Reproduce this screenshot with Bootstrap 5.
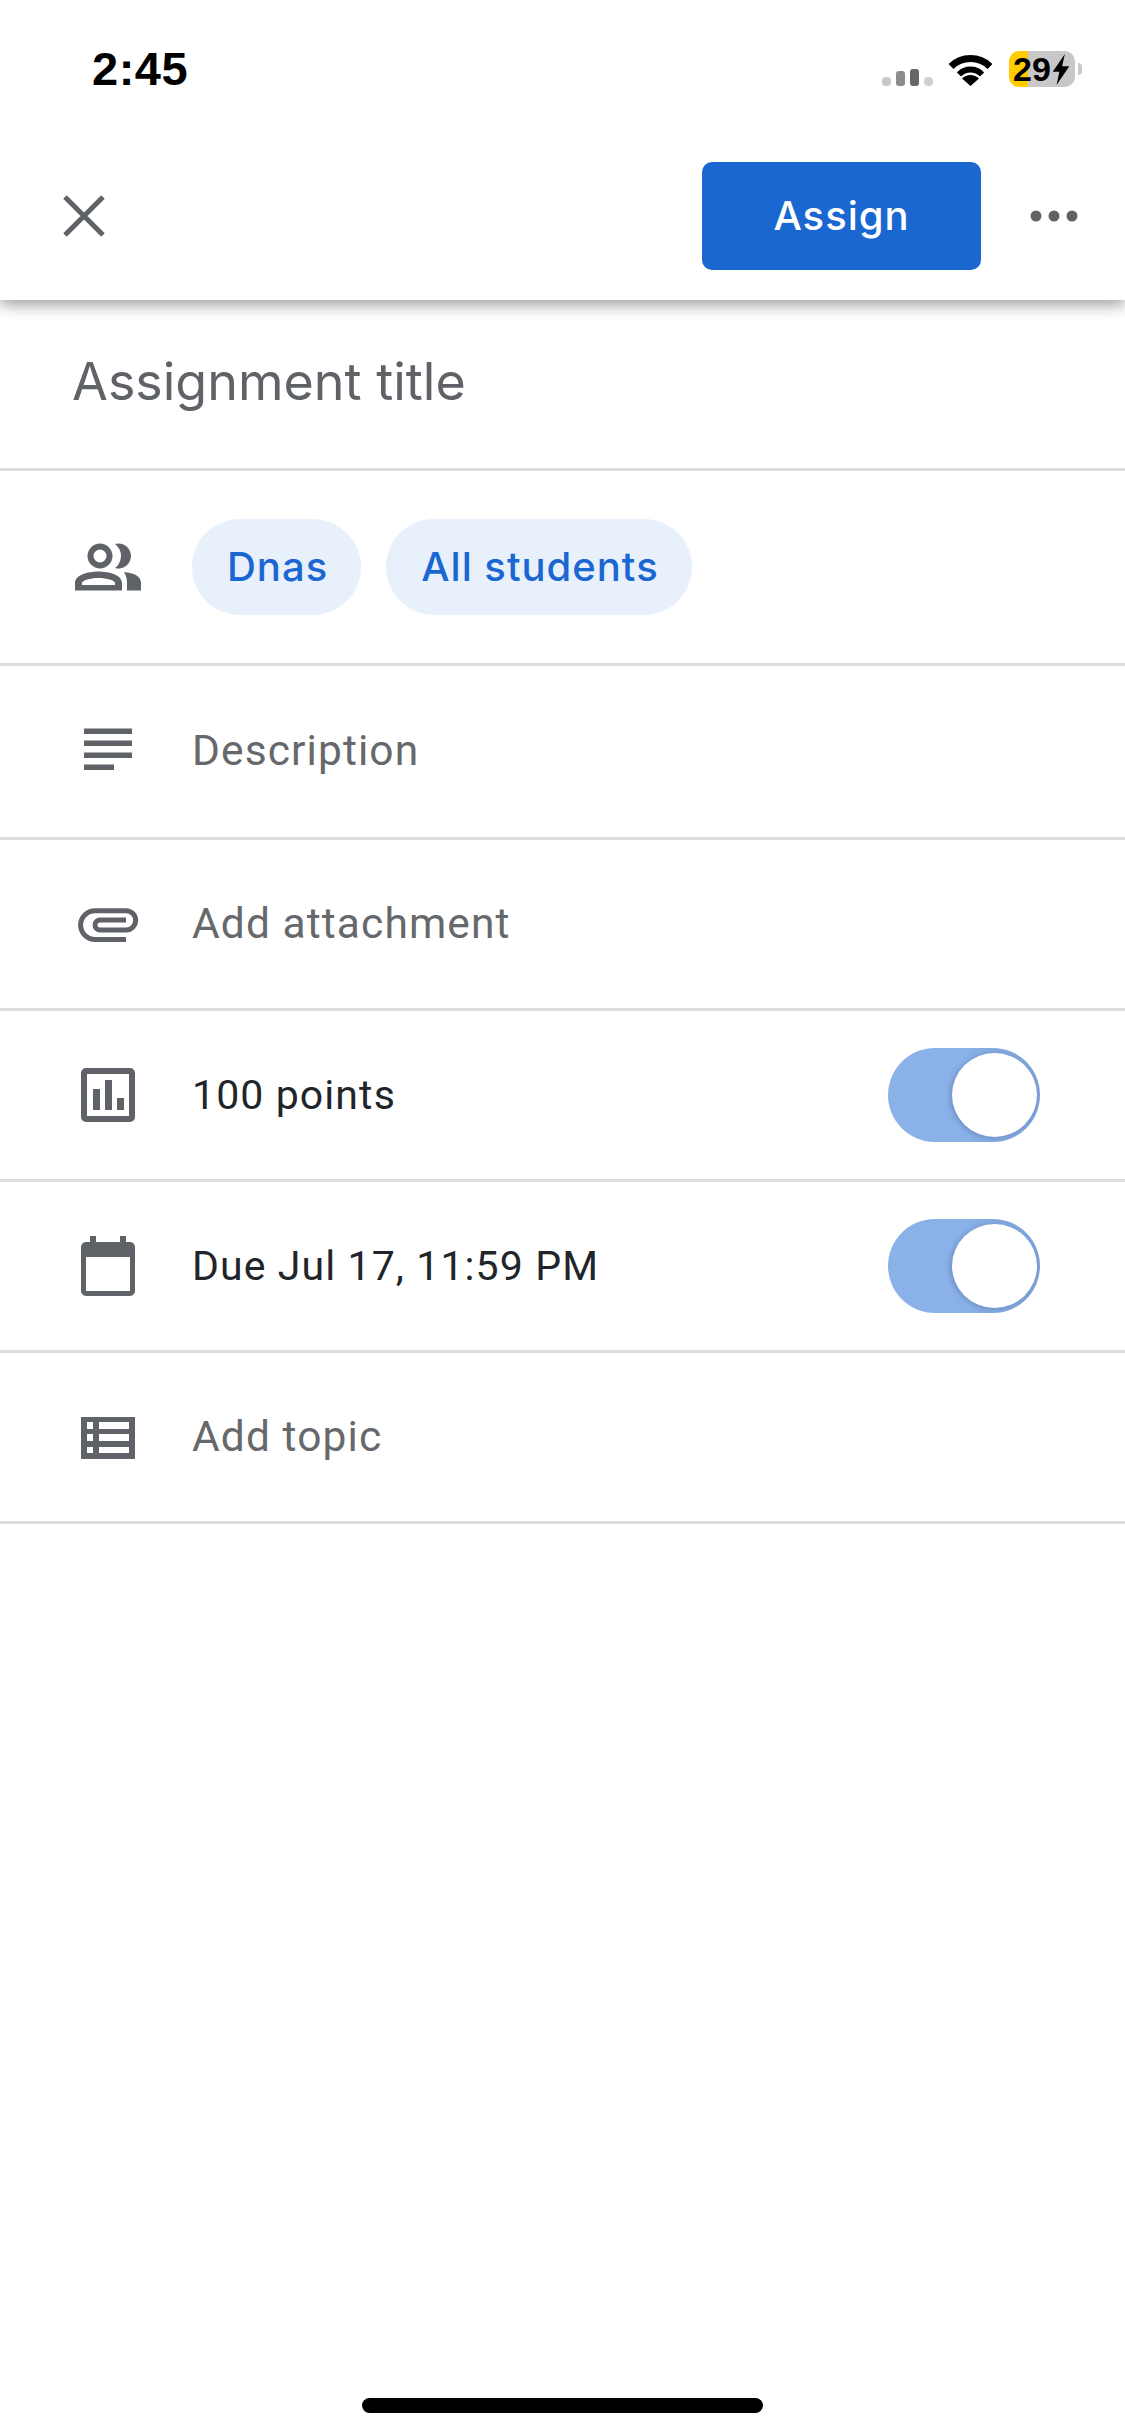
<!DOCTYPE html>
<html lang="en">
<head>
<meta charset="utf-8">
<title>Assignment</title>
<link href="https://cdn.jsdelivr.net/npm/bootstrap@5.3.0/dist/css/bootstrap.min.css" rel="stylesheet">
<style>
html,body{height:100%}
body{background:#fff;font-family:Roboto,"Liberation Sans",sans-serif;color:#202124}
.app-screen{min-height:2436px;width:1125px}
.app-top{height:300px;background:#fff;box-shadow:0 5px 14px rgba(0,0,0,.38);position:relative;z-index:2}
.status-row{height:132px;padding:6px 50px 0 92px}
.clock{font:700 47px/1 "Liberation Sans",sans-serif;color:#000;letter-spacing:.5px;margin-top:-2px}
.signal-ic{margin-top:16px;margin-right:15px}
.wifi-ic{margin-right:16px}
.batt{width:66px;height:36px;border-radius:10px;background:linear-gradient(90deg,#fc0 29%,#c8c8c8 29%);font:700 34px/36px "Liberation Sans",sans-serif;color:#000;position:relative;padding-left:4px}
.batt::after{content:"";position:absolute;right:-7px;top:12px;width:4px;height:12px;border-radius:0 4px 4px 0;background:#c8c8c8}
.tool-row{height:168px;padding:0 47px 0 63px}
.btn.assign-btn{width:279px;height:108px;border:0;border-radius:10px;background:#1a67d2;color:#fff;font:500 40px/1 Inter,sans-serif;letter-spacing:1px;margin-right:49px;padding:0}
.form-rows .list-group-item{border-width:0 0 3px;border-color:#dcdddd;padding:0;background:#fff}
.form-rows .list-group-item:last-child{border-bottom-width:3px}
.row-title{height:171px;padding:0 0 5px 72px!important;font:400 52px/1 Inter,sans-serif;color:#5f6368}
.row-chips{height:195px}
.row-desc{height:174px}
.row-std{height:171px}
.ic-slot{width:66px;height:66px;margin:0 51px 0 75px;flex:none;display:block;fill:#5f6368}
.ic-clip{fill:none;stroke:#5f6368;stroke-width:5}
.chip-pill{height:96px;border-radius:48px;background:#e8f0fc;color:#1a67d2;font:500 40px/96px Inter,sans-serif;letter-spacing:1px;padding:0 33px 0 35px;flex:none}
.chip-pill+.chip-pill{margin-left:25px}
.field-text{font:400 41px/1 Roboto,sans-serif;letter-spacing:1.1px}
.muted-text{font-size:42.500px;color:#66686b}
.toggle-on{width:152px;height:94px;border-radius:47px;background:linear-gradient(90deg,#8ab1e8 50%,#7ca2d8 100%);margin-right:85px;padding:5px 3px;justify-content:flex-end}
.toggle-knob{width:85px;height:84px;border-radius:50%;background:#fff;box-shadow:-2px 1px 5px rgba(40,70,120,.3)}
.home-bar{width:401px;height:15px;border-radius:8px;background:#000;margin-bottom:23px}
</style>
</head>
<body>
<div class="app-screen d-flex flex-column">
  <header class="app-top">
    <div class="status-row d-flex align-items-center">
      <span class="clock">2:45</span>
      <svg class="signal-ic ms-auto" width="51" height="17" viewBox="0 0 51 17"><rect y="8" width="9" height="9" rx="4" fill="#c8c8c8"/><rect x="14" y="2" width="9" height="15" rx="3" fill="#8c8c8c"/><rect x="28" width="9" height="17" rx="3" fill="#666"/><rect x="42" y="8" width="9" height="9" rx="4" fill="#d0d0d0"/></svg>
      <svg class="wifi-ic" width="45" height="33" viewBox="0 0 45 33"><path d="M3 13.5A28 28 0 0 1 42 13.5" fill="none" stroke="#000" stroke-width="7"/><path d="M11 21.500A16 16 0 0 1 34 21.500" fill="none" stroke="#000" stroke-width="6"/><path d="M22.500 33L14 25.500A12 12 0 0 1 31 25.500Z" fill="#000"/></svg>
      <div class="batt d-flex align-items-center"><span>29</span><svg width="20" height="31" viewBox="0 0 15 28"><path d="M11 0L0 16H6L3.500 28L15 11H8.500Z" fill="#000"/></svg></div>
    </div>
    <nav class="tool-row d-flex align-items-center">
      <svg width="42" height="42" viewBox="0 0 42 42"><path d="M2 2L40 40M40 2L2 40" stroke="#5f6368" stroke-width="5" fill="none"/></svg>
      <button type="button" class="btn assign-btn ms-auto">Assign</button>
      <svg width="48" height="12" viewBox="0 0 48 12" fill="#5f6368"><circle cx="6" cy="6" r="5.500"/><circle cx="24" cy="6" r="5.500"/><circle cx="42" cy="6" r="5.500"/></svg>
    </nav>
  </header>
  <ul class="form-rows list-group list-group-flush">
    <li class="list-group-item row-title d-flex align-items-center">Assignment title</li>
    <li class="list-group-item row-chips d-flex align-items-center">
      <svg class="ic-slot" viewBox="0 0 66 66"><circle cx="25" cy="22" r="9.500" fill="none" stroke="#5f6368" stroke-width="6"/><path d="M40 10A12.500 12.500 0 1 1 40 34A15 15 0 0 0 40 10Z"/><path fill-rule="evenodd" d="M0 56.500V49C0 41 13 37.500 23.500 37.500S47 41 47 49V56.500ZM7 51H40V49C40 46.500 32 44 23.500 44S7 46.500 7 49Z"/><path d="M49 38C59 39 66 42 66 49V56.500H52V49C52 45 51 41 49 38Z"/></svg>
      <span class="chip-pill">Dnas</span><span class="chip-pill">All students</span>
    </li>
    <li class="list-group-item row-desc d-flex align-items-center">
      <svg class="ic-slot" viewBox="0 0 66 66"><path d="M9 9.500H57V15H9ZM9 21.500H57V27H9ZM9 33.500H57V39H9ZM9 45.500H39V51H9Z"/></svg>
      <span class="field-text muted-text">Description</span>
    </li>
    <li class="list-group-item row-std d-flex align-items-center">
      <svg class="ic-slot ic-clip" viewBox="0 0 66 66"><path d="M51 48.500H20A14.400 14.400 0 0 1 20 19.700H51A9.650 9.650 0 0 1 51 39H25A5 5 0 0 1 25 29H51"/></svg>
      <span class="field-text muted-text">Add attachment</span>
    </li>
    <li class="list-group-item row-std d-flex align-items-center">
      <svg class="ic-slot" viewBox="0 0 66 66"><path fill-rule="evenodd" d="M11 6H55A5 5 0 0 1 60 11V55A5 5 0 0 1 55 60H11A5 5 0 0 1 6 55V11A5 5 0 0 1 11 6ZM12 12V54H54V12Z"/><path d="M18 27H25V48H18ZM30 18H37V48H30ZM42 36H49V48H42Z"/></svg>
      <span class="field-text flex-grow-1">100 points</span>
      <div class="toggle-on d-flex"><div class="toggle-knob"></div></div>
    </li>
    <li class="list-group-item row-std d-flex align-items-center">
      <svg class="ic-slot" viewBox="0 0 66 66"><path fill-rule="evenodd" d="M15 3H21V9H45V3H51V9H55A5 5 0 0 1 60 14V58A5 5 0 0 1 55 63H11A5 5 0 0 1 6 58V14A5 5 0 0 1 11 9H15ZM11 24V58H55V24Z"/></svg>
      <span class="field-text flex-grow-1">Due Jul 17, 11:59 PM</span>
      <div class="toggle-on d-flex"><div class="toggle-knob"></div></div>
    </li>
    <li class="list-group-item row-std d-flex align-items-center">
      <svg class="ic-slot" viewBox="0 0 66 66"><path fill-rule="evenodd" d="M6 13H60V55H6ZM12 18V25H18V18ZM24 18V25H54V18ZM12 30V37H18V30ZM24 30V37H54V30ZM12 43V49H18V43ZM24 43V49H54V43Z"/></svg>
      <span class="field-text muted-text">Add topic</span>
    </li>
  </ul>
  <div class="home-bar mt-auto mx-auto"></div>
</div>
</body>
</html>
